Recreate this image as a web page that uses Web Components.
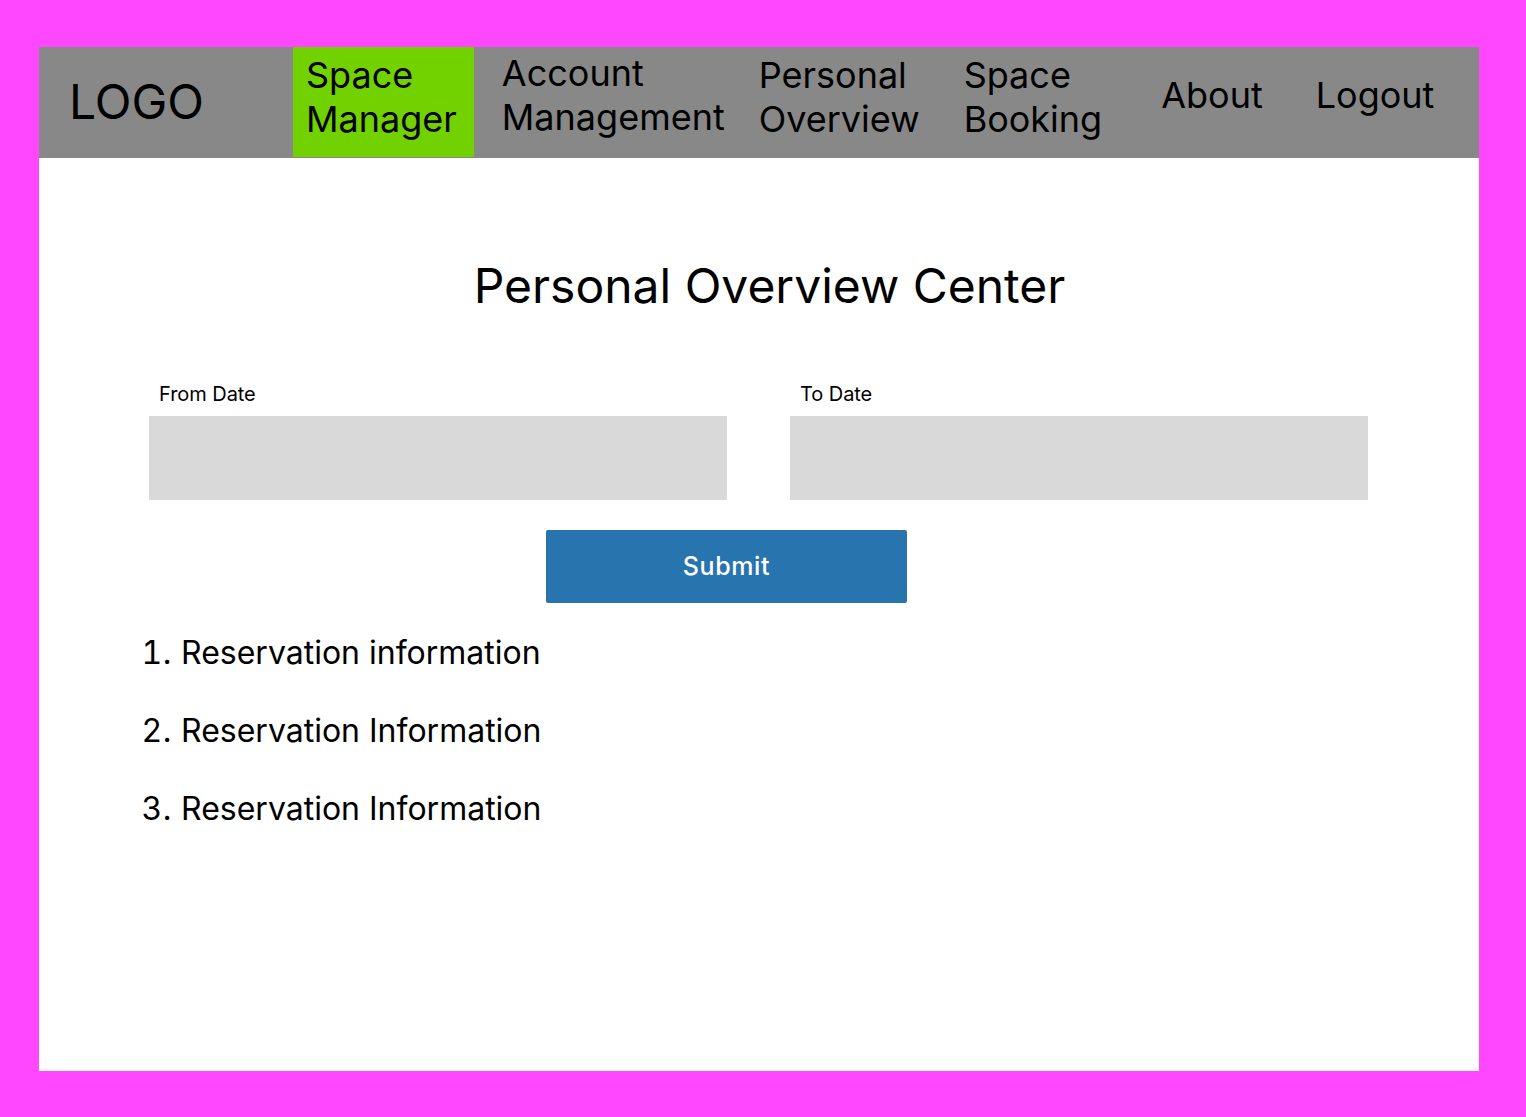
<!DOCTYPE html>
<html>
<head>
<meta charset="utf-8">
<style>
  html, body { margin: 0; height: 100%; }
  body { background: #ff47ff; font-family: Inter, sans-serif; color: #000; }
</style>
</head>
<body>
<app-frame>
  <top-nav>
    <nav-item active style="--lift: 10px">Space<br>Manager</nav-item>
    <nav-item style="--gap: 28px; --lift: 14px">Account<br>Management</nav-item>
    <nav-item style="--gap: 34px; --lift: 10px">Personal<br>Overview</nav-item>
    <nav-item style="--gap: 44px; --lift: 10px">Space<br>Booking</nav-item>
    <nav-item style="--gap: 59px; --lift: 14px">About</nav-item>
    <nav-item style="--gap: 53px; --lift: 14px">Logout</nav-item>
  </top-nav>
  <overview-page></overview-page>
</app-frame>

<script>
class AppFrame extends HTMLElement {
  constructor() {
    super();
    this.attachShadow({ mode: 'open' });
    this.shadowRoot.innerHTML = `
      <style>
        :host { display: block; box-sizing: border-box; width: 1526px; height: 1117px; padding: 47px 47px 46px 39px; }
        .sheet { background: #fff; height: 100%; display: flex; flex-direction: column; }
      </style>
      <div class="sheet"><slot></slot></div>
    `;
  }
}

class TopNav extends HTMLElement {
  constructor() {
    super();
    this.attachShadow({ mode: 'open' });
    this.shadowRoot.innerHTML = `
      <style>
        :host { display: flex; height: 111px; background: #888; flex: none; }
        .logo { width: 254px; box-sizing: border-box; padding-left: 30px; font-size: 48px; line-height: 110px; }
        .items { display: flex; flex: 1; }
      </style>
      <div class="logo">LOGO</div>
      <div class="items"><slot></slot></div>
    `;
  }
}

class NavItem extends HTMLElement {
  constructor() {
    super();
    this.attachShadow({ mode: 'open' });
    this.shadowRoot.innerHTML = `
      <style>
        :host { display: flex; align-items: center; box-sizing: border-box; height: 110px; font-size: 36px; line-height: 44px; margin-left: var(--gap, 0); padding-bottom: var(--lift, 0); }
        :host([active]) { background: #72d200; padding-left: 13px; padding-right: 17px; }
      </style>
      <div><slot></slot></div>
    `;
  }
}

class OverviewPage extends HTMLElement {
  constructor() {
    super();
    this.attachShadow({ mode: 'open' });
    this.shadowRoot.innerHTML = `
      <style>
        :host { display: block; padding: 98px 111px 0 110px; }
        h1 { margin: 0 0 66px; padding-left: 22px; font-weight: 400; font-size: 48px; line-height: 60px; text-align: center; }
        .dates { display: flex; gap: 63px; }
        .submit { display: block; margin: 30px 0 0 397px; padding: 0 0 2px; width: 361px; height: 73px; border: 0; border-radius: 2px; background: #2874ae; color: #fff; font: 500 25px Inter, sans-serif; letter-spacing: 0.6px; }
        ol { margin: 30px 0 0; padding: 0 0 0 32px; font-size: 32px; line-height: 40px; }
        li { margin-bottom: 38px; }
        li::marker { letter-spacing: 0.5px; }
      </style>
      <h1>Personal Overview Center</h1>
      <div class="dates">
        <date-field label="From Date"></date-field>
        <date-field label="To Date"></date-field>
      </div>
      <button class="submit">Submit</button>
      <ol>
        <li>Reservation information</li>
        <li>Reservation Information</li>
        <li>Reservation Information</li>
      </ol>
    `;
  }
}

class DateField extends HTMLElement {
  constructor() {
    super();
    this.attachShadow({ mode: 'open' });
    this.shadowRoot.innerHTML = `
      <style>
        :host { display: block; width: 578px; }
        label { display: block; padding-left: 10px; font-size: 20px; letter-spacing: -0.06px; line-height: 24px; margin-bottom: 10px; }
        .box { height: 84px; background: #d9d9d9; }
      </style>
      <label>${this.getAttribute('label') || ''}</label>
      <div class="box"></div>
    `;
  }
}

customElements.define('app-frame', AppFrame);
customElements.define('top-nav', TopNav);
customElements.define('nav-item', NavItem);
customElements.define('overview-page', OverviewPage);
customElements.define('date-field', DateField);
</script>
</body>
</html>
